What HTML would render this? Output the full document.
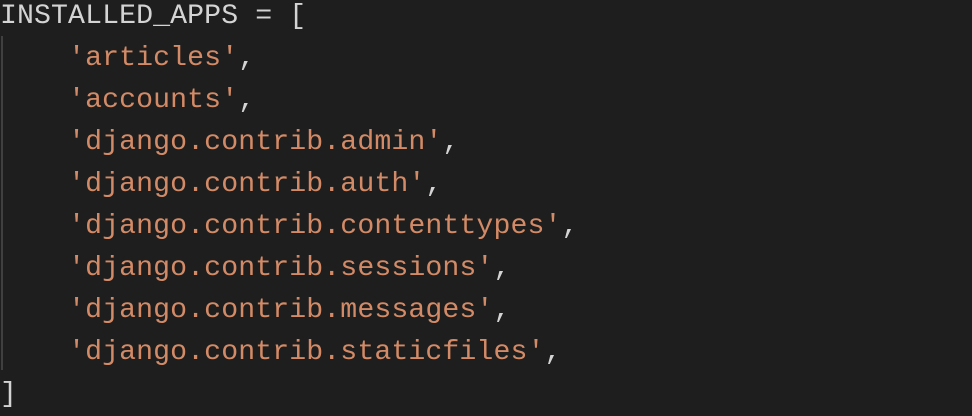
<!DOCTYPE html>
<html><head><style>
html,body{margin:0;padding:0;background:#1e1e1e;width:972px;height:413px;overflow:hidden}
pre{margin:0;position:absolute;left:0;top:-4px;font-family:"Liberation Mono",monospace;font-size:28.2px;line-height:42px;color:#d4d4d4;letter-spacing:0.1px}
.s{color:#d38a66}
.g{position:absolute;left:1px;top:36px;width:2px;height:334px;background:#404040}
</style></head><body>
<div class="g"></div>
<pre>INSTALLED_APPS = [
    <span class="s">'articles'</span>,
    <span class="s">'accounts'</span>,
    <span class="s">'django.contrib.admin'</span>,
    <span class="s">'django.contrib.auth'</span>,
    <span class="s">'django.contrib.contenttypes'</span>,
    <span class="s">'django.contrib.sessions'</span>,
    <span class="s">'django.contrib.messages'</span>,
    <span class="s">'django.contrib.staticfiles'</span>,
]</pre>
</body></html>
